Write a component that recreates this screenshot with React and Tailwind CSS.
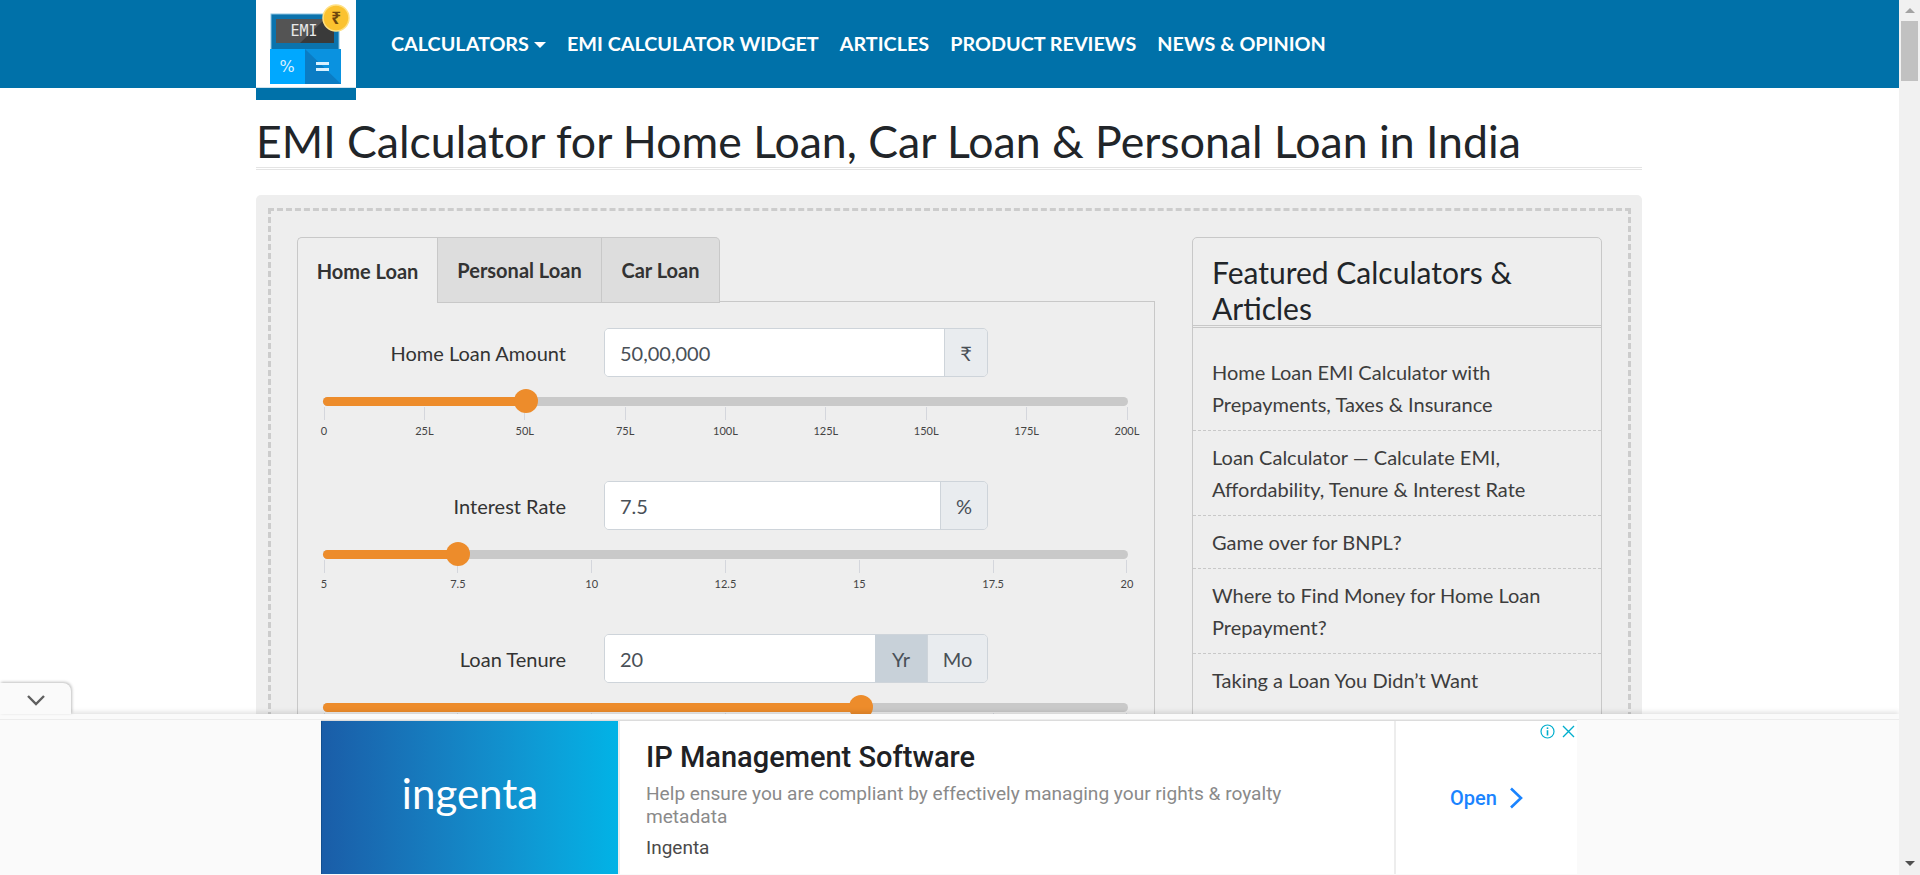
import React from 'react'

const navItems = ['EMI CALCULATOR WIDGET', 'ARTICLES', 'PRODUCT REVIEWS', 'NEWS & OPINION']

const featured = [
  ['Home Loan EMI Calculator with', 'Prepayments, Taxes & Insurance'],
  ['Loan Calculator — Calculate EMI,', 'Affordability, Tenure & Interest Rate'],
  ['Game over for BNPL?'],
  ['Where to Find Money for Home Loan', 'Prepayment?'],
  ['Taking a Loan You Didn’t Want'],
]

const sliders = [
  {
    label: 'Home Loan Amount',
    value: '50,00,000',
    percent: 25.15,
    ticks: ['0', '25L', '50L', '75L', '100L', '125L', '150L', '175L', '200L'],
    addons: [{ text: '₹', width: 'w-[43px]' }],
  },
  {
    label: 'Interest Rate',
    value: '7.5',
    percent: 16.67,
    ticks: ['5', '7.5', '10', '12.5', '15', '17.5', '20'],
    addons: [{ text: '%', width: 'w-[47px]' }],
  },
  {
    label: 'Loan Tenure',
    value: '20',
    percent: 66.67,
    ticks: ['0', '5', '10', '15', '20', '25', '30'],
    addons: [
      { text: 'Yr', width: 'w-[52px]', active: true },
      { text: 'Mo', width: 'w-[60px]' },
    ],
  },
]

const Logo = () => (
  <div className="flex flex-col w-[100px] h-[100px] shrink-0 bg-[#0071a9]">
    <div className="h-[87px] bg-white border-b border-b-[#cfe3ee] box-content">
      <svg width="100" height="87" viewBox="0 0 100 87">
        <rect x="15" y="14" width="68" height="38" fill="#0b73ad" stroke="#8cc4e2" />
        <rect x="20" y="19" width="58" height="24" fill="#545454" />
        <path d="M44 43 L69 19 H78 V43 Z" fill="#3a3a3a" />
        <text x="48" y="36" textAnchor="middle" fill="#e8e8e8" fontSize="15" fontFamily="DejaVu Sans Mono, monospace">EMI</text>
        <rect x="14" y="49" width="35" height="35" fill="#00a8ff" />
        <rect x="49" y="49" width="36" height="35" fill="#0a92e0" />
        <path d="M49 49 L85 84 H49 Z" fill="#0a7cc4" />
        <text x="31" y="72" textAnchor="middle" fill="#d9f1ff" fontSize="16" fontFamily="DejaVu Sans, sans-serif">%</text>
        <rect x="60" y="62" width="13" height="3" fill="#d9f1ff" />
        <rect x="60" y="68" width="13" height="3" fill="#d9f1ff" />
        <circle cx="80" cy="18" r="13" fill="#fbc22f" stroke="#ffe083" strokeWidth="1.5" />
        <text x="80" y="24" textAnchor="middle" fill="#6e470e" fontSize="17" fontWeight="700" fontFamily="Noto Sans, DejaVu Sans, sans-serif">₹</text>
      </svg>
    </div>
  </div>
)

const Header = () => (
  <header className="flex h-[88px] bg-[#0071a9] pl-[256px]">
    <Logo />
    <nav className="flex items-center h-[88px] pl-[35px] text-white font-bold text-[19.8px]">
      <a className="flex items-center mr-[21px]">
        CALCULATORS
        <span className="ml-[5px] mt-[1px] w-0 h-0 border-x-[6px] border-x-transparent border-t-[6px] border-t-white" />
      </a>
      {navItems.map((x) => (
        <a key={x} className="mr-[21px]">{x}</a>
      ))}
    </nav>
  </header>
)

const Slider = ({ percent, ticks }) => (
  <div className="mt-[20px] ml-[25px] w-[805px]">
    <div className="relative h-[9px] rounded-[5px] bg-[#c9c9c9]">
      <div className="h-full rounded-l-[5px] bg-[#ed8c2b]" style={{ width: `${percent}%` }} />
      <div
        className="absolute top-[-8px] w-[24px] h-[24px] -ml-[11px] rounded-full bg-[#ed8c2b]"
        style={{ left: `${percent}%` }}
      />
    </div>
    <div className="flex justify-between mt-[1px] px-[1px]">
      {ticks.map((t) => (
        <div key={t} className="flex flex-col items-center w-0">
          <span className="w-px h-[13px] bg-[#d4d6dc] shrink-0" />
          <span className="mt-[4px] text-[11px] leading-[14px] text-[#444] whitespace-nowrap">{t}</span>
        </div>
      ))}
    </div>
  </div>
)

const SliderRow = ({ label, value, percent, ticks, addons }) => (
  <div className="h-[153px]">
    <div className="flex items-center h-[49px]">
      <label className="w-[268px] mr-[38px] text-right text-[20px] text-[#333]">{label}</label>
      <div className="flex w-[384px] h-[49px] rounded-[5px] border border-[#ced4da] overflow-hidden">
        <div className="flex-1 flex items-center pl-[15px] bg-white text-[20px] text-[#495057]">{value}</div>
        {addons.map((a) => (
          <div
            key={a.text}
            className={
              a.active
                ? `${a.width} flex items-center justify-center bg-[#c8d1d9] text-[20px] text-[#495057]`
                : `${a.width} flex items-center justify-center border-l border-l-[#ced4da] bg-[#e9ecef] text-[20px] text-[#495057]`
            }
          >
            {a.text}
          </div>
        ))}
      </div>
    </div>
    <Slider percent={percent} ticks={ticks} />
  </div>
)

const Tabs = () => (
  <div className="w-[858px] shrink-0">
    <div className="flex h-[66px] font-bold text-[20px] text-[#333]">
      <div className="flex items-center justify-center w-[140px] h-[66px] rounded-tl-[5px] border-l border-t border-[#c8c8c8] bg-[#eee] relative z-10">
        Home Loan
      </div>
      <div className="flex items-center justify-center w-[165px] h-[66px] border border-[#c8c8c8] bg-[#ddd]">
        Personal Loan
      </div>
      <div className="flex items-center justify-center w-[118px] h-[66px] border border-l-0 border-[#c8c8c8] rounded-tr-[5px] bg-[#ddd]">
        Car Loan
      </div>
    </div>
    <div className="-mt-[2px] pt-[26px] border border-[#c8c8c8]">
      {sliders.map((s) => (
        <SliderRow key={s.label} {...s} />
      ))}
    </div>
  </div>
)

const Featured = () => (
  <aside className="ml-[37px] w-[410px] h-[600px] shrink-0 self-start rounded-[5px] border border-[#c8c8c8]">
    <h3 className="h-[90px] pt-[16px] px-[19px] text-[30px] leading-[36px] text-[#212529] border-b-[3px] border-double border-b-[#c8c8c8]">
      Featured Calculators &amp; Articles
    </h3>
    <ul className="pt-[18px] text-[20px] leading-[32px] text-[#3d3d3d]">
      {featured.map((lines) => (
        <li key={lines[0]} className="px-[19px] py-[10px] border-b border-dashed border-b-[#c8c8c8] last:border-b-0 whitespace-nowrap">
          {lines.map((l) => (
            <div key={l}>{l}</div>
          ))}
        </li>
      ))}
    </ul>
  </aside>
)

const BottomAd = () => (
  <div className="absolute left-0 right-0 bottom-0 h-[161px] bg-[#fafafa] shadow-[0_-2px_5px_rgba(0,0,0,0.12)]">
    <div className="absolute left-0 top-[-31px] flex items-center justify-center pt-[3px] w-[71px] h-[31px] rounded-tr-[8px] bg-[#fafafa] shadow-[1px_-1px_3px_rgba(0,0,0,0.25)]">
      <svg width="20" height="12" viewBox="0 0 20 12" fill="none" stroke="#5f5f5f" strokeWidth="2.4">
        <path d="M2 2 L10 10 L18 2" />
      </svg>
    </div>
    <div className="h-[6px] border-b border-b-[#ececec]" />
    <div className="relative flex ml-[321px] w-[1256px] h-[154px] border-t border-t-[#dcdcdc] bg-white">
      <div className="flex items-center justify-center w-[297px] bg-gradient-to-r from-[#1a5da8] to-[#01b3e6] border-l border-l-[#134f90]">
        <span className="text-[42px] leading-[46px] font-['Lato',sans-serif] font-normal text-white mt-[-10px]">ingenta</span>
      </div>
      <div className="w-[2px] bg-[#ededed]" />
      <div className="w-[774px] pl-[26px] pt-[18px] font-['Roboto',sans-serif]">
        <div className="text-[29px] leading-[36px] font-medium text-[#202124]">IP Management Software</div>
        <div className="mt-[7px] w-[680px] text-[19.1px] leading-[23px] text-[#8a8a8a]">
          Help ensure you are compliant by effectively managing your rights &amp; royalty metadata
        </div>
        <div className="mt-[8px] text-[19px] leading-[23px] text-[#4a4a4a]">Ingenta</div>
      </div>
      <div className="w-[2px] bg-[#ededed]" />
      <div className="flex-1 flex items-center pl-[54px] font-['Roboto',sans-serif] font-medium text-[20px] text-[#1a84ff]">
        Open
        <svg className="ml-[12px]" width="14" height="22" viewBox="0 0 14 22" fill="none" stroke="#1a84ff" strokeWidth="2.6">
          <path d="M2 1.5 L12 11 L2 20.5" />
        </svg>
      </div>
      <div className="absolute right-0 top-0 flex items-center gap-[7px] h-[21px] pl-[4px] pr-[2px] bg-white">
        <svg width="15" height="15" viewBox="0 0 15 15" fill="none" stroke="#00aecd">
          <circle cx="7.5" cy="7.5" r="6.5" strokeWidth="1.2" />
          <path d="M7.5 6.2 V11.5" strokeWidth="1.6" />
          <path d="M7.5 3.4 V5" strokeWidth="1.6" />
        </svg>
        <svg width="13" height="13" viewBox="0 0 13 13" fill="none" stroke="#00aecd" strokeWidth="1.4">
          <path d="M1 1 L12 12 M12 1 L1 12" />
        </svg>
      </div>
    </div>
  </div>
)

const Scrollbar = () => (
  <div className="flex flex-col items-center justify-between w-[21px] h-full bg-[#f1f1f1] pb-[9px] pt-[8px]">
    <div className="flex flex-col items-center">
      <span className="w-0 h-0 border-x-[5px] border-x-transparent border-b-[5px] border-b-[#a3a3a3]" />
      <span className="mt-[8px] w-[17px] h-[60px] bg-[#c1c1c1]" />
    </div>
    <span className="w-0 h-0 border-x-[5px] border-x-transparent border-t-[5px] border-t-[#505050]" />
  </div>
)

export default function App() {
  return (
    <div className="flex h-[875px] w-full overflow-hidden bg-white font-['Lato',sans-serif]">
      <main className="relative flex-1 h-full overflow-hidden">
        <Header />
        <div className="ml-[256px] w-[1386px]">
          <h1 className="h-[82px] pt-[29px] text-[44.6px] leading-[48px] text-[#212529] border-b-[3px] border-double border-b-[#e4e4e4] box-border whitespace-nowrap">
            EMI Calculator for Home Loan, Car Loan &amp; Personal Loan in India
          </h1>
          <section className="mt-[25px] pl-[12px] pr-[11px] pt-[13px] pb-[40px] rounded-[5px] bg-[#eee]">
            <div className="flex pl-[26px] pt-[26px] pb-[40px] border-[3px] border-dashed border-[#ccc]">
              <Tabs />
              <Featured />
            </div>
          </section>
        </div>
        <BottomAd />
      </main>
      <Scrollbar />
    </div>
  )
}
